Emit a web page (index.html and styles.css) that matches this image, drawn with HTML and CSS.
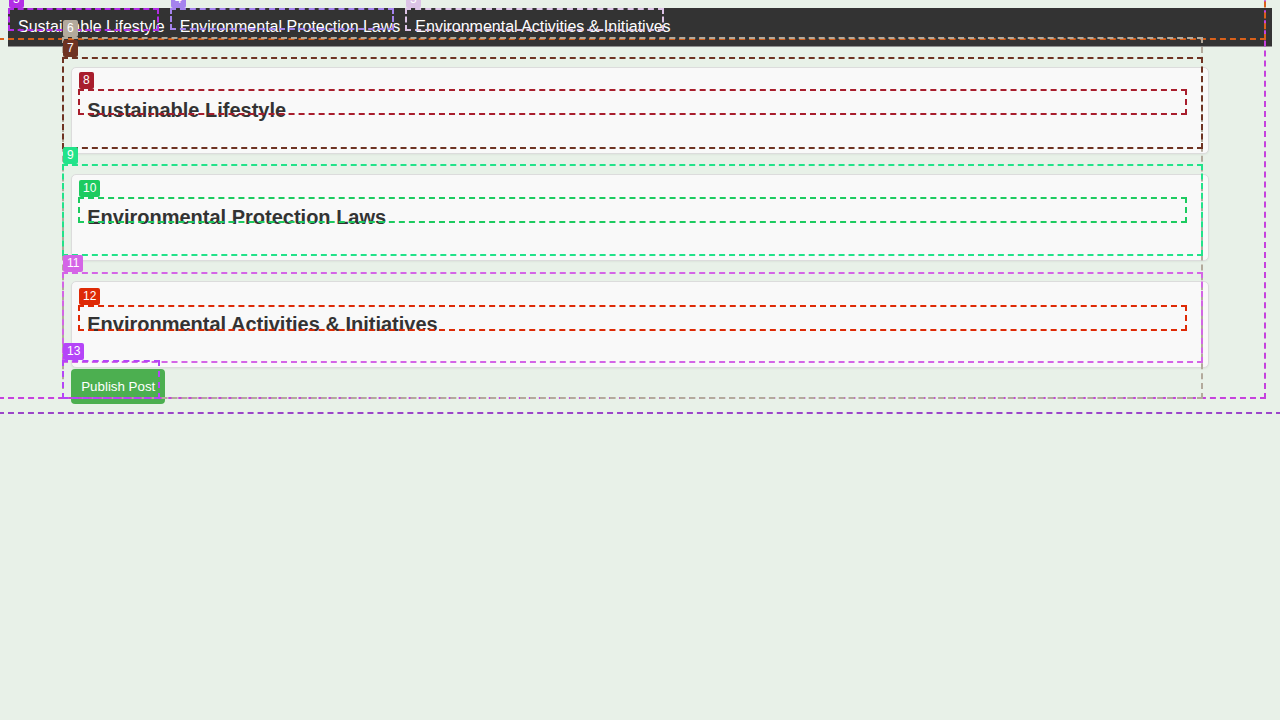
FILE: index.html
```html
<!DOCTYPE html>
<html lang="en">
<head>
<meta charset="utf-8">
<title>Eco Blog</title>
<link rel="stylesheet" href="styles.css">
</head>
<body>
<nav class="topnav">
  <a href="#" class="nav-link">Sustainable Lifestyle</a>
  <a href="#" class="nav-link">Environmental Protection Laws</a>
  <a href="#" class="nav-link">Environmental Activities &amp; Initiatives</a>
</nav>
<main class="container">
  <section class="card"><h2 class="card-title">Sustainable Lifestyle</h2></section>
  <section class="card"><h2 class="card-title">Environmental Protection Laws</h2></section>
  <section class="card"><h2 class="card-title">Environmental Activities &amp; Initiatives</h2></section>
  <button class="publish">Publish Post</button>
</main>

<div class="overlays">
  <div class="ov ov-html"></div>
  <div class="ov ov-body"></div>
  <div class="ov ov-nav"></div>
  <div class="ov ov-3"><span class="tag">3</span></div>
  <div class="ov ov-4"><span class="tag">4</span></div>
  <div class="ov ov-5"><span class="tag">5</span></div>
  <div class="ov ov-6"><span class="tag">6</span></div>
  <div class="ov ov-7"><span class="tag">7</span></div>
  <div class="ov ov-8"><span class="tag">8</span></div>
  <div class="ov ov-9"><span class="tag">9</span></div>
  <div class="ov ov-10"><span class="tag">10</span></div>
  <div class="ov ov-11"><span class="tag">11</span></div>
  <div class="ov ov-12"><span class="tag">12</span></div>
  <div class="ov ov-13"><span class="tag">13</span></div>
</div>
</body>
</html>
```

FILE: styles.css
```css
html, body {
  background: #e8f1e8;
}
body {
  margin: 8px;
  font-family: "Liberation Sans", Arial, sans-serif;
  color: #333;
}
.topnav {
  display: flex;
  gap: 15px;
  padding-left: 10px;
  background: #333;
  border-bottom: 1px solid #8f8f8f;
}
.nav-link {
  color: #fff;
  text-decoration: none;
  font-size: 16px;
  padding: 10px 0;
}
.container {
  width: 90%;
  margin: 0 auto;
}
.card {
  margin-top: 20px;
  background: #f9f9f9;
  border: 1px solid #dcdcdc;
  border-radius: 5px;
  padding: 15px;
  box-shadow: 0 1px 2px rgba(0,0,0,0.05);
}
.card-title {
  margin: 16px 0;
  font-size: 20px;
  line-height: 23px;
  font-weight: bold;
  color: #333;
}
.publish {
  margin-top: 1px;
  background: #4caf50;
  color: #fff;
  border: none;
  border-radius: 4px;
  padding: 10px;
  font-family: "Liberation Sans", Arial, sans-serif;
  font-size: 13.33px;
  line-height: normal;
}

/* debug overlays */
.overlays {
  position: absolute;
  left: 0;
  top: 0;
  width: 0;
  height: 0;
}
.ov {
  position: absolute;
  box-sizing: border-box;
  border: 2px dashed var(--c);
}
.tag {
  position: absolute;
  left: -1px;
  bottom: calc(100% + 2px);
  height: 17px;
  padding: 0 4px;
  background: var(--c);
  color: #fff;
  font-family: "Liberation Sans", Arial, sans-serif;
  font-size: 12px;
  line-height: 17px;
  border-radius: 2px;
}
.ov-html { --c: #9b45c9; left: -2px; top: -30px; width: 1284px; height: 444px; }
.ov-body { --c: #c542dd; left: -2px; top: -20px; width: 1268px; height: 419px; }
.ov-nav  { --c: #d9601a; left: -2px; top: -20px; width: 1268px; height: 60px; }
.ov-3  { --c: #b32ee6; left: 8px;   top: 8px;   width: 151px;  height: 23px; }
.ov-4  { --c: #a583ee; left: 170px; top: 8px;   width: 224px;  height: 22px; }
.ov-5  { --c: #dcc3e6; left: 405px; top: 8px;   width: 259px;  height: 23px; }
.ov-6  { --c: #b3aa9c; left: 62px;  top: 37px;  width: 1141px; height: 362px; }
.ov-7  { --c: #6e3322; left: 62px;  top: 57px;  width: 1141px; height: 92px; }
.ov-8  { --c: #a81e2d; left: 78px;  top: 89px;  width: 1109px; height: 26px; }
.ov-9  { --c: #22e38a; left: 62px;  top: 164px; width: 1141px; height: 92px; }
.ov-10 { --c: #1dcb60; left: 78px;  top: 197px; width: 1109px; height: 26px; }
.ov-11 { --c: #d465e6; left: 62px;  top: 272px; width: 1141px; height: 91px; }
.ov-12 { --c: #de2a06; left: 78px;  top: 305px; width: 1109px; height: 26px; }
.ov-13 { --c: #b545f8; left: 62px;  top: 360px; width: 98px;   height: 39px; }
```
